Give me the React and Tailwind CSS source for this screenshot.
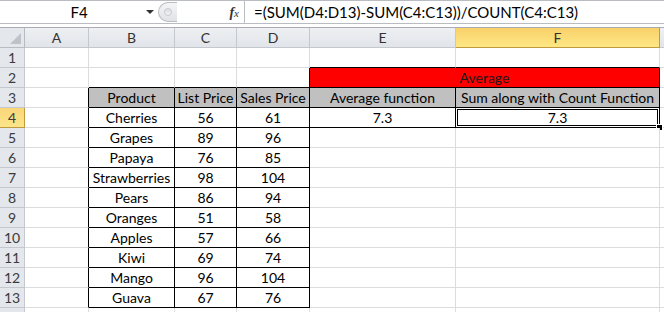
import React from "react";

const COLS = ["A", "B", "C", "D", "E", "F"];
const WIDTHS = ["w-[64px]", "w-[86px]", "w-[62px]", "w-[73px]", "w-[146px]", "w-[204px]"];

const fruits = [
  ["Cherries", "56", "61"],
  ["Grapes", "89", "96"],
  ["Papaya", "76", "85"],
  ["Strawberries", "98", "104"],
  ["Pears", "86", "94"],
  ["Oranges", "51", "58"],
  ["Apples", "57", "66"],
  ["Kiwi", "69", "74"],
  ["Mango", "96", "104"],
  ["Guava", "67", "76"],
];

// cells holding a thin black border: B3:D13 and E2:F4
function inBox(r, c) {
  return (r >= 3 && r <= 13 && c >= 1 && c <= 3) || (r >= 2 && r <= 4 && c >= 4 && c <= 5);
}

function cellText(r, c) {
  if (r === 3) return ["", "Product", "List Price", "Sales Price", "Average function", "Sum along with Count Function"][c];
  if (r >= 4 && r <= 13 && c >= 1 && c <= 3) return fruits[r - 4][c - 1];
  if (r === 4 && (c === 4 || c === 5)) return "7.3";
  return "";
}

function Cell({ r, c }) {
  const right = inBox(r, c) || inBox(r, c + 1) ? "border-r-black" : "border-r-[#dadcdd]";
  const bottom = inBox(r, c) || inBox(r + 1, c) ? "border-b-black" : "border-b-[#dadcdd]";
  const fill = r === 3 && c >= 1 ? "bg-[#c0c0c0]" : "bg-white";
  const selected = r === 4 && c === 5;
  return (
    <div
      className={`relative ${WIDTHS[c]} h-full shrink-0 border-r border-b ${right} ${bottom} ${fill} flex items-end justify-center pb-[1px] leading-[17px] whitespace-nowrap`}
    >
      {cellText(r, c)}
      {selected && (
        <div className="absolute left-[-1px] top-[-1px] right-[-1px] bottom-[-1px] border border-black">
          <div className="w-full h-full border border-white">
            <div className="w-full h-full border border-black" />
          </div>
          <div className="absolute right-[-4px] bottom-[-4px] w-[7px] h-[7px] bg-black border border-white" />
        </div>
      )}
    </div>
  );
}

function RowHeader({ n }) {
  const active = n === 4;
  return (
    <div
      className={`w-[25px] h-full shrink-0 border-r border-b flex items-end justify-center pb-[1px] leading-[17px] text-[#3b3b3b] ${
        active
          ? "bg-gradient-to-b from-[#f9d67a] to-[#fde58a] border-r-[#c29a3e] border-b-[#c29a3e]"
          : "bg-[#e4e7ec] border-r-[#c4c8ce] border-b-[#c4c8ce]"
      }`}
    >
      {n <= 13 ? n : ""}
    </div>
  );
}

function Row({ r }) {
  return (
    <div className="flex h-[20px]">
      <RowHeader n={r} />
      {r === 2 ? (
        <>
          <Cell r={2} c={0} />
          <Cell r={2} c={1} />
          <Cell r={2} c={2} />
          <Cell r={2} c={3} />
          <div className="w-[350px] h-full shrink-0 bg-[#ff0000] border-r border-b border-r-black border-b-black flex items-end justify-center pb-[1px] leading-[17px] text-[#1a1a1a]">
            Average
          </div>
        </>
      ) : (
        COLS.map((_, c) => <Cell key={c} r={r} c={c} />)
      )}
      <div className="flex-1 h-full border-b border-b-[#dadcdd] bg-white" />
    </div>
  );
}

export default function App() {
  const rows = Array.from({ length: 14 }, (_, i) => i + 1);
  return (
    <div className="w-[664px] h-[312px] overflow-hidden bg-white font-['Lato',sans-serif] text-[14px] text-black">
      {/* formula bar */}
      <div className="flex h-[24px] border-t border-b border-[#b9bcc1] bg-white">
        <div className="relative w-[158px] shrink-0 flex items-center justify-center text-[15px]">
          F4
          <span className="absolute right-[4px] top-[9px] w-0 h-0 border-l-[4px] border-r-[4px] border-t-[4px] border-l-transparent border-r-transparent border-t-[#333]" />
        </div>
        <div className="w-[20px] shrink-0 flex items-center">
          <div className="w-[19px] h-[20px] rounded-l-full border-l border-t border-b border-[#b9bcc1] bg-gradient-to-b from-[#f4f5f7] to-[#dfe2e6] flex items-center justify-center">
            <div className="w-[8px] h-[8px] rounded-full bg-gradient-to-b from-[#d9dce0] to-[#f2f3f5] border border-[#c9ccd1]" />
          </div>
        </div>
        <div className="w-[66px] shrink-0 flex items-center justify-end pr-[5px] font-['Liberation_Serif',serif] italic text-[14px] text-[#333]">
          <span className="font-bold">f</span>
          <span className="text-[11px] mt-[3px]">x</span>
        </div>
        <div className="flex-1 border-l border-[#b9bcc1] flex items-center pl-[9px] text-[15px] whitespace-nowrap">
          =(SUM(D4:D13)-SUM(C4:C13))/COUNT(C4:C13)
        </div>
      </div>
      <div className="h-[3px] bg-white" />
      {/* column headers */}
      <div className="flex h-[21px] border-t border-[#a9adb3]">
        <div className="relative w-[25px] shrink-0 h-full bg-[#e4e7ec] border-r border-b border-[#b8bcc2]">
          <span className="absolute right-[3px] bottom-[3px] w-0 h-0 border-b-[11px] border-l-[11px] border-b-[#bfc3c9] border-l-transparent" />
        </div>
        {COLS.map((l, i) => (
          <div
            key={l}
            className={`${WIDTHS[i]} shrink-0 h-full border-r border-b flex items-center justify-center text-[#333] ${
              l === "F"
                ? "bg-gradient-to-b from-[#f9d16a] to-[#fde784] border-[#c29a3e]"
                : "bg-gradient-to-b from-[#eef0f3] to-[#e1e4e9] border-[#c4c8ce]"
            }`}
          >
            {l}
          </div>
        ))}
        <div className="flex-1 h-full bg-gradient-to-b from-[#eef0f3] to-[#e1e4e9] border-b border-[#c4c8ce]" />
      </div>
      {rows.map((r) => (
        <Row key={r} r={r} />
      ))}
    </div>
  );
}
